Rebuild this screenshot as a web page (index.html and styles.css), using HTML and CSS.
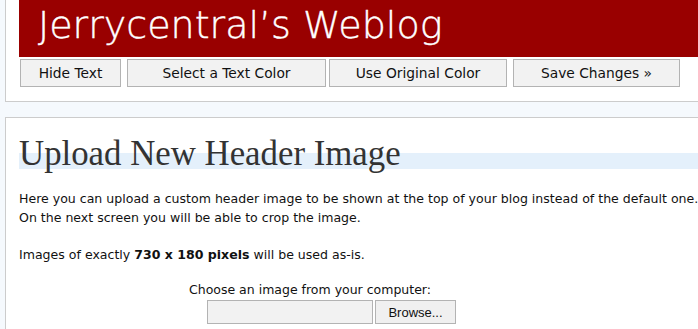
FILE: index.html
```html
<!DOCTYPE html>
<html>
<head>
<meta charset="utf-8">
<link rel="stylesheet" href="styles.css">
</head>
<body>
<div class="page">
  <div class="box box-top">
    <div class="banner"><span class="blog-title">Jerrycentral’s Weblog</span></div>
    <div class="btn-row">
      <button class="btn btn-hide">Hide Text</button>
      <button class="btn btn-select">Select a Text Color</button>
      <button class="btn btn-orig">Use Original Color</button>
      <button class="btn btn-save">Save Changes »</button>
    </div>
  </div>
  <div class="box box-upload">
    <h2 class="heading">Upload New Header Image</h2>
    <p class="text">Here you can upload a custom header image to be shown at the top of your blog instead of the default one.<br>On the next screen you will be able to crop the image.</p>
    <p class="text">Images of exactly <strong>730 x 180 pixels</strong> will be used as-is.</p>
    <div class="upload">
      <div class="upload-label">Choose an image from your computer:</div>
      <div class="file-row">
        <span class="file-field"></span>
        <span class="file-btn">Browse...</span>
      </div>
    </div>
  </div>
</div>
</body>
</html>
```

FILE: styles.css
```css
html, body {
  margin: 0;
  padding: 0;
  background: #f5f9fd;
  overflow: hidden;
}
.page {
  width: 698px;
  height: 329px;
  overflow: hidden;
  padding-left: 5px;
  box-sizing: border-box;
}
.box {
  width: 760px;
  background: #fff;
  border: 1px solid #cccccc;
  box-sizing: border-box;
  padding-left: 13px;
}
.box-top {
  border-top: 0;
  padding-bottom: 14px;
}
.banner {
  height: 57px;
  background: #990000;
  display: flex;
  align-items: center;
  padding-left: 19px;
  box-sizing: border-box;
}
.blog-title {
  color: #fff;
  font-family: "DejaVu Sans", sans-serif;
  font-weight: 200;
  font-size: 38px;
  line-height: 1;
  margin-top: -8px;
  -webkit-text-stroke: 0.4px #fff;
}
.btn-row {
  display: flex;
  margin-top: 2px;
  padding-left: 1px;
}
.btn {
  height: 28px;
  box-sizing: border-box;
  background: #f2f2f2;
  border: 1px solid #b3b3b3;
  font-family: "DejaVu Sans", Verdana, sans-serif;
  font-size: 13.8px;
  color: #111;
  padding: 0;
  margin: 0;
}
.btn-hide { width: 101px; }
.btn-select { width: 199px; margin-left: 6px; }
.btn-orig { width: 178px; margin-left: 3px; }
.btn-save { width: 167px; margin-left: 6px; }
.box-upload {
  margin-top: 15px;
  height: 240px;
  border-bottom: 0;
}
.heading {
  margin: 18px 0 0 0;
  font-family: "Liberation Serif", serif;
  font-weight: normal;
  font-size: 34.8px;
  line-height: 36px;
  color: #333;
  background: linear-gradient(to bottom, transparent 0, transparent 17px, #e4f0fb 17px, #e4f0fb 33px, transparent 33px);
}
.text {
  font-family: "DejaVu Sans", Verdana, sans-serif;
  font-size: 12.55px;
  line-height: 19px;
  color: #111;
  margin: 17px 0 0 0;
}
.text + .text {
  margin-top: 18px;
}
.upload {
  margin-top: 18px;
  font-family: "DejaVu Sans", Verdana, sans-serif;
  font-size: 12.5px;
  color: #111;
}
.upload-label {
  width: 582px;
  text-align: center;
  line-height: 16px;
}
.file-row {
  display: flex;
  margin-top: 2px;
  margin-left: 188px;
}
.file-field {
  width: 166px;
  height: 24px;
  box-sizing: border-box;
  border: 1px solid #b3b3b3;
  background: #f2f2f2;
}
.file-btn {
  width: 81px;
  height: 24px;
  box-sizing: border-box;
  border: 1px solid #b3b3b3;
  background: #f0f0f0;
  margin-left: 2px;
  font-family: "Liberation Sans", Arial, sans-serif;
  font-size: 13px;
  display: flex;
  align-items: center;
  justify-content: center;
}
```
